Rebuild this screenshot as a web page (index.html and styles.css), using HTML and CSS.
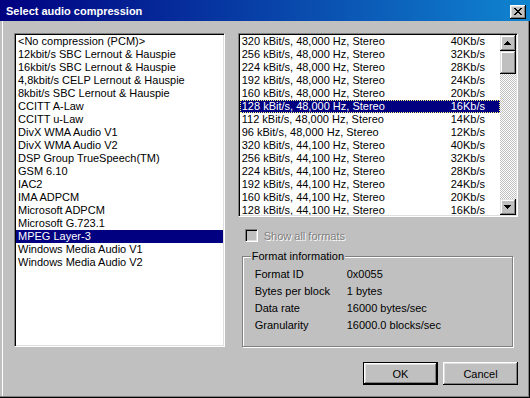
FILE: index.html
```html
<!DOCTYPE html>
<html lang="en">
<head>
<meta charset="UTF-8" />
<title>Select audio compression</title>
<link rel="stylesheet" href="styles.css">
</head>
<body>

<div class="dialog">
  <div class="titlebar">
    <span class="title">Select audio compression</span>
    <button class="close" type="button">
      <svg width="8" height="7" viewBox="0 0 8 7"><path d="M0 0h2v1H0zM6 0h2v1H6zM1 1h2v1H1zM5 1h2v1H5zM2 2h4v1H2zM3 3h2v1H3zM2 4h4v1H2zM1 5h2v1H1zM5 5h2v1H5zM0 6h2v1H0zM6 6h2v1H6z" fill="#000"/></svg>
    </button>
  </div>

  <div class="client">
    <div class="main">
      <ul class="listbox codecs">
        <li>&lt;No compression (PCM)&gt;</li>
        <li>12kbit/s SBC Lernout &amp; Hauspie</li>
        <li>16kbit/s SBC Lernout &amp; Hauspie</li>
        <li>4,8kbit/s CELP Lernout &amp; Hauspie</li>
        <li>8kbit/s SBC Lernout &amp; Hauspie</li>
        <li>CCITT A-Law</li>
        <li>CCITT u-Law</li>
        <li>DivX WMA Audio V1</li>
        <li>DivX WMA Audio V2</li>
        <li>DSP Group TrueSpeech(TM)</li>
        <li>GSM 6.10</li>
        <li>IAC2</li>
        <li>IMA ADPCM</li>
        <li>Microsoft ADPCM</li>
        <li>Microsoft G.723.1</li>
        <li class="selected">MPEG Layer-3</li>
        <li>Windows Media Audio V1</li>
        <li>Windows Media Audio V2</li>
      </ul>

      <div class="side">
        <div class="listbox formats">
          <ul class="rows">
            <li><span>320 kBit/s, 48,000 Hz, Stereo</span><span>40Kb/s</span></li>
            <li><span>256 kBit/s, 48,000 Hz, Stereo</span><span>32Kb/s</span></li>
            <li><span>224 kBit/s, 48,000 Hz, Stereo</span><span>28Kb/s</span></li>
            <li><span>192 kBit/s, 48,000 Hz, Stereo</span><span>24Kb/s</span></li>
            <li><span>160 kBit/s, 48,000 Hz, Stereo</span><span>20Kb/s</span></li>
            <li class="selected focused"><span>128 kBit/s, 48,000 Hz, Stereo</span><span>16Kb/s</span></li>
            <li><span>112 kBit/s, 48,000 Hz, Stereo</span><span>14Kb/s</span></li>
            <li><span>96 kBit/s, 48,000 Hz, Stereo</span><span>12Kb/s</span></li>
            <li><span>320 kBit/s, 44,100 Hz, Stereo</span><span>40Kb/s</span></li>
            <li><span>256 kBit/s, 44,100 Hz, Stereo</span><span>32Kb/s</span></li>
            <li><span>224 kBit/s, 44,100 Hz, Stereo</span><span>28Kb/s</span></li>
            <li><span>192 kBit/s, 44,100 Hz, Stereo</span><span>24Kb/s</span></li>
            <li><span>160 kBit/s, 44,100 Hz, Stereo</span><span>20Kb/s</span></li>
            <li><span>128 kBit/s, 44,100 Hz, Stereo</span><span>16Kb/s</span></li>
          </ul>
          <div class="scrollbar">
            <div class="arrow">
              <svg width="7" height="4" viewBox="0 0 7 4"><path d="M3 0h1v1h1v1h1v1h1v1H0V3h1V2h1V1h1z" fill="#000"/></svg>
            </div>
            <div class="thumb"></div>
            <div class="track"></div>
            <div class="arrow">
              <svg width="7" height="4" viewBox="0 0 7 4"><path d="M0 0h7v1H6v1H5v1H4v1H3V3H2V2H1V1H0z" fill="#000"/></svg>
            </div>
          </div>
        </div>

        <label class="check disabled">
          <span class="box"></span>
          <span>Show all formats</span>
        </label>

        <div class="group">
          <div class="group-title">Format information</div>
          <div class="info">
            <div class="info-row"><span>Format ID</span><span>0x0055</span></div>
            <div class="info-row"><span>Bytes per block</span><span>1 bytes</span></div>
            <div class="info-row"><span>Data rate</span><span>16000 bytes/sec</span></div>
            <div class="info-row"><span>Granularity</span><span>16000.0 blocks/sec</span></div>
          </div>
        </div>
      </div>
    </div>

    <div class="actions">
      <button class="btn default" type="button">OK</button>
      <button class="btn" type="button">Cancel</button>
    </div>
  </div>
</div>

</body>
</html>
```

FILE: styles.css
```css
body {
  margin: 0;
  font-family: "Liberation Sans", Arial, sans-serif;
  font-size: 11px;
  color: #000;
}

.dialog {
  width: 530px;
  height: 398px;
  background-color: #c0c0c0;
  display: flex;
  flex-direction: column;
}

.titlebar {
  height: 21px;
  flex: none;
  display: flex;
  align-items: center;
  padding: 0 4px 0 6px;
  background: linear-gradient(to right, #000080, #1084d0);
  color: white;
  font-weight: bold;
}

.close {
  margin: 2px 0 0 auto;
  width: 16px;
  height: 14px;
  padding: 0;
  border: none;
  background-color: #c0c0c0;
  display: flex;
  align-items: center;
  justify-content: center;
  box-shadow: inset -1px -1px #000, inset 1px 1px #fff, inset -2px -2px #808080, inset 2px 2px #dfdfdf;
}

.close svg {
  margin: 0 1px 1px 0;
}

.client {
  flex: 1;
  padding: 12px 12px 0 14px;
  box-shadow: inset -1px -1px #000, inset -2px -2px #808080, inset 2px 0 #c0c0c0, inset 3px 0 #fff;
}

.main {
  display: flex;
  gap: 13px;
}

.listbox {
  background-color: white;
  border: 1px solid;
  border-color: #808080 #fff #fff #808080;
  box-shadow: inset 1px 1px #000, inset -1px -1px #dfdfdf;
  padding: 1px;
  box-sizing: border-box;
  overflow: hidden;
}

ul {
  margin: 0;
  list-style: none;
}

li {
  height: 13px;
  line-height: 13px;
  padding-left: 2px;
  white-space: nowrap;
}

li.selected {
  background-color: #000080;
  color: white;
}

li.focused {
  outline: 1px dotted #ffff80;
  outline-offset: -1px;
}

.codecs {
  width: 212px;
  height: 314px;
}

.side {
  width: 282px;
  display: flex;
  flex-direction: column;
}

.formats {
  height: 184px;
  display: flex;
}

.rows {
  flex: 1;
  padding: 0;
  overflow: hidden;
}

.rows li {
  display: grid;
  grid-template-columns: 209px 1fr;
}

.scrollbar {
  width: 16px;
  display: flex;
  flex-direction: column;
}

.arrow,
.thumb {
  background-color: #c0c0c0;
  box-shadow: inset -1px -1px #000, inset 1px 1px #dfdfdf, inset -2px -2px #808080, inset 2px 2px #fff;
}

.arrow {
  height: 16px;
  display: flex;
  align-items: center;
  justify-content: center;
}

.arrow svg {
  margin: 0 1px 1px 0;
}

.thumb {
  height: 23px;
}

.track {
  flex: 1;
  background: repeating-conic-gradient(#fff 0 25%, #c0c0c0 0 50%) 0 0 / 2px 2px;
}

.check {
  margin: 12px 0 0 7px;
  height: 13px;
  display: flex;
  align-items: center;
  gap: 6px;
}

.check .box {
  width: 13px;
  height: 13px;
  box-sizing: border-box;
  border: 1px solid;
  border-color: #808080 #fff #fff #808080;
  box-shadow: inset 1px 1px #000, inset -1px -1px #dfdfdf;
  background-color: #c0c0c0;
}

.check.disabled {
  color: #808080;
  text-shadow: 1px 1px #fff;
}

.group {
  margin: 14px 5px 0 4px;
  border: 1px solid #808080;
  box-shadow: 1px 1px 0 #fff, inset 1px 1px 0 #fff;
  padding: 0 0 12px 0;
}

.group-title {
  width: fit-content;
  margin: -7px 0 0 8px;
  padding: 0 1px;
  line-height: 13px;
  background-color: #c0c0c0;
}

.info {
  margin-top: 3px;
  padding-left: 12px;
}

.info-row {
  display: grid;
  grid-template-columns: 92px 1fr;
  line-height: 17px;
}

.actions {
  display: flex;
  justify-content: flex-end;
  gap: 5px;
  margin-top: 15px;
}

.btn {
  width: 75px;
  height: 23px;
  padding: 0;
  border: none;
  background-color: #c0c0c0;
  font-family: inherit;
  font-size: 11px;
  color: #000;
  box-shadow: inset -1px -1px #000, inset 1px 1px #fff, inset -2px -2px #808080, inset 2px 2px #dfdfdf;
}

.btn.default {
  border: 1px solid #000;
}
```
